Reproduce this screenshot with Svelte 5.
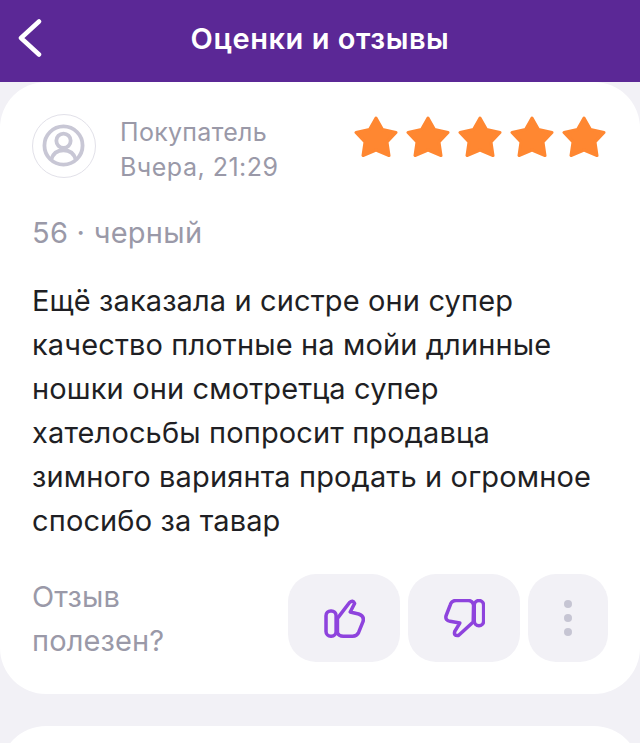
<script>
  const stars = [0, 1, 2, 3, 4];
</script>

<div class="page">
  <header class="top">
    <svg class="back" viewBox="0 0 24 38" aria-hidden="true"><path d="M21 2.5 3 19l18 16.500" /></svg>
    <h1>Оценки и отзывы</h1>
  </header>

  <section class="card">
    <div class="head">
      <div class="avatar">
        <svg viewBox="0 0 64 64" aria-hidden="true">
          <circle cx="32" cy="32" r="20" />
          <circle cx="32" cy="27" r="7.500" />
          <path d="M19 47c2-7 7-10 13-10s11 3 13 10" />
        </svg>
      </div>
      <div class="who">
        <div>Покупатель</div>
        <div class="when">Вчера, 21:29</div>
      </div>
      <div class="stars">
        {#each stars as s (s)}
          <svg viewBox="0 0 44 42" aria-hidden="true"><path d="M22 2 28.500 13.500 42 16.500 33 26 35 39.500 22 34 9 39.500 11 26 2 16.500 15.500 13.500Z" /></svg>
        {/each}
      </div>
    </div>

    <div class="variant">56 · черный</div>

    <p class="text">Ещё заказала и систре они супер<br />качество плотные на мойи длинные<br />ношки они смотретца супер<br />хателосьбы попросит продавца<br />зимного вариянта продать и огромное<br />спосибо за тавар</p>

    <div class="foot">
      <div class="useful">Отзыв<br />полезен?</div>
      <div class="actions">
        <button class="btn wide" aria-label="Полезен">
          <svg class="thumb" viewBox="160 113 122 115" aria-hidden="true">
            <rect x="166" y="148" width="30" height="75" rx="14" />
            <path d="M200 170 236 123Q246 114 251 126L238 151 263 157Q281 163 276 180L263 212Q258 223 245 223H217Q204 223 200 213Z" />
          </svg>
        </button>
        <button class="btn wide" aria-label="Не полезен">
          <svg class="thumb" viewBox="520 120 122 115" aria-hidden="true">
            <rect x="610" y="124" width="28" height="75" rx="14" />
            <path d="M608 137Q604 124 592 124H556Q543 124 539 136L526 170Q523 183 538 186L567 191 552 216Q548 230 563 228L607 188Z" />
          </svg>
        </button>
        <button class="btn more" aria-label="Ещё">
          <span></span><span></span><span></span>
        </button>
      </div>
    </div>
  </section>

  <section class="card next"></section>
</div>

<style>
  :global(body) {
    margin: 0;
    background: #f2f1f6;
  }
  .page {
    width: 640px;
    height: 743px;
    overflow: hidden;
    background: #f2f1f6;
    font-family: Inter, "Liberation Sans", sans-serif;
  }
  .top {
    height: 82px;
    background: #5b2896;
    display: flex;
    align-items: center;
    justify-content: center;
    position: relative;
  }
  .back {
    position: absolute;
    left: 18px;
    top: 19px;
    width: 24px;
    height: 38px;
    fill: none;
    stroke: #fff;
    stroke-width: 4.500;
    stroke-linecap: round;
    stroke-linejoin: round;
  }
  h1 {
    margin: 0 0 6px;
    color: #fff;
    font-size: 29px;
    font-weight: 600;
    letter-spacing: 0.55px;
  }
  .card {
    background: #fff;
    border-radius: 46px;
    padding: 32px;
    height: 612px;
    box-sizing: border-box;
  }
  .next {
    margin-top: 32px;
  }
  .head {
    display: flex;
    align-items: flex-start;
  }
  .avatar {
    width: 64px;
    height: 64px;
    box-sizing: border-box;
    border: 1.500px solid #e2e1e9;
    border-radius: 50%;
    flex: none;
  }
  .avatar svg {
    display: block;
    width: 61px;
    height: 61px;
    fill: none;
    stroke: #c8c7d5;
    stroke-width: 4;
  }
  .who {
    margin-left: 24px;
    margin-top: 1px;
    color: #9a99a8;
    font-size: 25px;
    line-height: 35px;
    letter-spacing: 0.3px;
  }
  .when {
    letter-spacing: 0.5px;
  }
  .stars {
    margin-left: auto;
    margin-right: 2px;
    margin-top: 2px;
    display: flex;
    gap: 8px;
  }
  .stars svg {
    width: 44px;
    height: 42px;
    fill: #ff8731;
    stroke: #ff8731;
    stroke-width: 3;
    stroke-linejoin: round;
  }
  .variant {
    margin-top: 29px;
    color: #9a99a8;
    font-size: 29px;
    line-height: 38px;
    letter-spacing: 0.27px;
  }
  .text {
    margin: 27px 0 0;
    color: #1f1f24;
    font-size: 29px;
    line-height: 44px;
    letter-spacing: 0.13px;
  }
  .foot {
    margin-top: 31px;
    display: flex;
    justify-content: space-between;
    align-items: flex-start;
  }
  .useful {
    color: #9a99a8;
    font-size: 29px;
    line-height: 44px;
    letter-spacing: 0.13px;
    margin-top: 1px;
  }
  .actions {
    display: flex;
    gap: 8px;
  }
  .btn {
    height: 88px;
    border: 0;
    padding: 0;
    border-radius: 28px;
    background: #f2f1f6;
    display: flex;
    align-items: center;
    justify-content: center;
  }
  .wide {
    width: 112px;
  }
  .more {
    width: 80px;
    flex-direction: column;
    gap: 6px;
  }
  .more span {
    width: 8px;
    height: 8px;
    border-radius: 50%;
    background: #c6c5d3;
  }
  .thumb {
    width: 41px;
    height: 39px;
    fill: none;
    stroke: #8e43dd;
    stroke-width: 10.500;
    stroke-linejoin: round;
  }
</style>
